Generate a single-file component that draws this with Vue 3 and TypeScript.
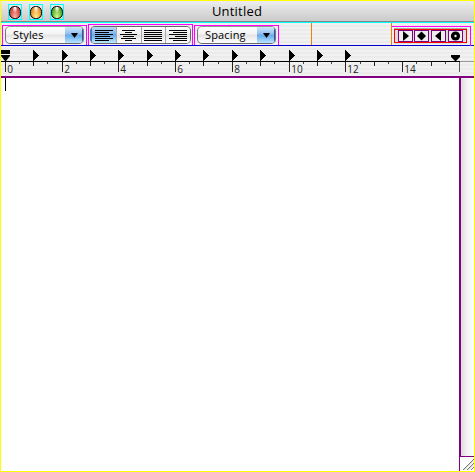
<script setup lang="ts">
const lights = ['red', 'amber', 'green']
const unit = 28.38
const origin = 5
const marks = Array.from({ length: 17 }, (_, i) => ({ i, x: Math.floor(origin + 0.3 + i * unit) }))
const halves = Array.from({ length: 16 }, (_, i) => Math.floor(origin + 0.3 + (i + 0.5) * unit))
const tabs = marks.slice(1, 13)
const labels = marks.filter((m) => m.i % 2 === 0 && m.i < 16)
const tri = (x: number) => `M${x} 4h1v1h1v1h1v1h1v1h1v1h1v1h-1v1h-1v1h-1v1h-1v1h-1v1h-1z`
const alignments = [
  [[0, 18], [0, 14], [0, 18], [0, 15], [0, 18], [0, 14]],
  [[2, 13], [5, 7], [0, 17], [3, 11], [1, 15], [5, 7]],
  [[0, 18], [0, 18], [0, 18], [0, 18], [0, 18], [0, 18]],
  [[0, 18], [4, 14], [0, 18], [6, 12], [0, 18], [4, 14]],
]
</script>

<template>
  <div class="window">
    <header class="titlebar">
      <div class="lights">
        <span v-for="c in lights" :key="c" class="light"><i :class="c"></i></span>
      </div>
      <div class="title">Untitled</div>
      <div class="balance"></div>
    </header>
    <div class="toolbar">
      <div class="group styles">
        <div class="popup"><span>Styles</span><b><svg width="7" height="5"><path d="M0 0h7L3.5 5z" /></svg></b></div>
      </div>
      <div class="group alignment">
        <div class="segments">
          <span v-for="(lines, n) in alignments" :key="n" :class="{ active: n === 0 }">
            <svg width="18" height="11" shape-rendering="crispEdges">
              <rect v-for="(l, k) in lines" :key="k" :x="l[0]" :y="k * 2" :width="l[1]" height="1" />
            </svg>
          </span>
        </div>
      </div>
      <div class="group spacing">
        <div class="popup"><span>Spacing</span><b><svg width="7" height="5"><path d="M0 0h7L3.5 5z" /></svg></b></div>
      </div>
      <div class="gap"></div>
      <div class="blank"></div>
      <div class="tabgroup">
        <div class="wells">
          <span><svg width="13" height="10"><path d="M4 0l6 5-6 5z" /></svg></span>
          <span><svg width="13" height="10"><path d="M6.5 .5L11 5 6.5 9.5 2 5z" /></svg></span>
          <span><svg width="13" height="10"><path d="M9 0v10L3 5z" /></svg></span>
          <span><svg width="13" height="10"><circle cx="6.5" cy="5" r="4.6" /><circle cx="6.5" cy="5" r="1.2" fill="#eee" /></svg></span>
        </div>
      </div>
    </div>
    <svg class="ruler" width="473" height="30" viewBox="1 0 473 30">
      <g shape-rendering="crispEdges">
        <rect x="1" y="15" width="459" height="1" />
        <rect x="460" y="15" width="14" height="1" fill="#999" />
        <rect v-for="m in marks" :key="m.i" :x="m.x" y="16" width="1" :height="m.i % 2 ? 4 : 10" :fill="m.i === 16 ? '#555' : '#222'" />
        <rect v-for="x in halves" :key="x" :x="x" y="16" width="1" height="2" fill="#444" />
      </g>
      <path v-for="t in tabs" :key="t.i" :d="tri(t.x)" />
      <path d="M1 4h9v4H1zM1 9h9v1L6 15H5L1 10z" />
      <path d="M451 9h9v2l-4 4h-1l-4-4z" />
      <text v-for="m in labels" :key="m.i" :x="m.x + 2.2" y="27">{{ m.i }}</text>
    </svg>
    <main>
      <div class="page"><i class="caret"></i></div>
      <aside>
        <div class="scroll"></div>
        <svg class="grip" width="14" height="13">
          <path d="M3 13L14 2M7 13l7-7M11 13l3-3" stroke="#777" />
          <path d="M4.4 13L14 3.4M8.4 13L14 7.4" stroke="#ccc" />
        </svg>
      </aside>
    </main>
  </div>
</template>

<style>
body { margin: 0; overflow: hidden; }
</style>
<style scoped>
* { box-sizing: border-box; }
.window { width: 475px; height: 472px; border: 1px solid #ff0; background: #fff; display: flex; flex-direction: column; font-family: "Open Sans", "Noto Sans", sans-serif; color: #000; }
svg { display: block; }
.titlebar { height: 22px; flex: none; display: flex; align-items: flex-start; background: linear-gradient(#ededed, #c9c9c9); border-bottom: 1px solid #0ff; box-shadow: inset 0 -1px #888; }
.lights { display: flex; gap: 7px; padding: 3px 0 0 7px; width: 70px; }
.light { width: 14px; height: 16px; border: 1px solid #0ff; display: flex; align-items: center; justify-content: center; }
.light i { width: 12px; height: 13px; border-radius: 5.5px; border: 1px solid; }
.red { border-color: #803c38 #a05550 #a77; background: radial-gradient(ellipse at 50% 5%, #fff 5%, transparent 38%), radial-gradient(ellipse at 50% 95%, #ffb7b0, #d85850 60%, #ad3832); }
.amber { border-color: #805522 #b08040 #aa9160; background: radial-gradient(ellipse at 50% 5%, #fff 5%, transparent 38%), radial-gradient(ellipse at 50% 95%, #fff49a, #f2a13b 60%, #ae6d20); }
.green { border-color: #3d6422 #648c3d #849769; background: radial-gradient(ellipse at 50% 5%, #fff 5%, transparent 38%), radial-gradient(ellipse at 50% 95%, #d5ff97, #70b735 60%, #427b20); }
.title { flex: 1; text-align: center; font-size: 13px; line-height: 20px; letter-spacing: .2px; padding-right: 1px; }
.balance { width: 70px; }
.toolbar { height: 23px; flex: none; display: flex; align-items: flex-end; background: repeating-linear-gradient(#f1f1f1 0 2px, #ebebeb 2px 4px); border-bottom: 1px solid #0000d0; }
.group { border: 1px solid #f0f; border-bottom: 0; flex: none; }
.styles { width: 85px; height: 20px; margin-left: 1px; padding: 0 2px 0 2px; }
.alignment { width: 105px; height: 21px; margin-left: 1px; padding: 1px 1px 0; }
.spacing { width: 85px; height: 20px; margin-left: 1px; padding: 0 2px; }
.popup { height: 18px; border: 1px solid #888; border-color: #999 #777 #666; border-radius: 5px; display: flex; background: linear-gradient(#fff, #f2f2f2 45%, #e3e3e3 50%, #fff); overflow: hidden; }
.popup span { flex: 1; padding-left: 7px; font-size: 11px; line-height: 15px; letter-spacing: .15px; }
.popup b { width: 18px; display: flex; align-items: center; justify-content: center; background: linear-gradient(#d5e7fa, #8dbdf0 45%, #64a7ea 50%, #b8e5ff); box-shadow: inset -1px 0 #2858a8; }
.segments { height: 18px; border: 1px solid #666; border-left: 0; border-radius: 5px; display: flex; overflow: hidden; }
.segments span { flex: 1; display: flex; align-items: center; justify-content: center; background: linear-gradient(#fff, #eee 45%, #e1e1e1 50%, #fff); border-left: 1px solid #aaa; }
.segments .active { border-left: 2px solid #4779b8; background: linear-gradient(#bcd9f5, #79b1eb 45%, #68a8e7 50%, #b9eaff); }
.gap { width: 32px; flex: none; }
.blank { height: 22px; width: 80px; flex: none; border-left: 1px solid #f08000; }
.tabgroup { position: relative; width: 79px; height: 22px; border-left: 1px solid #f08000; padding-top: 3px; flex: none; }
.tabgroup::before { content: ""; position: absolute; left: 0; top: 3px; width: 78px; height: 19px; border: 1px solid #f0f; border-left: 0; border-bottom: 0; }
.wells { margin: 3px 0 0 2px; width: 73px; height: 14px; border: 1px solid #f00; display: flex; gap: 2px; padding: 0 3px; background: #ddd; box-shadow: 0 -1px #aaa, 0 1px #ddd; }
.wells span { width: 15px; height: 12px; border: 1px solid #800080; background: #eee; }
.wells span:nth-child(2) { margin-left: -1px; }
.ruler { flex: none; background: repeating-linear-gradient(#f1f1f1 0 2px, #ebebeb 2px 4px); }
.ruler text { font-size: 10px; fill: #222; }
main { flex: 1; border-top: 2px solid #800080; display: flex; min-height: 0; }
.page { width: 458px; padding: 0 0 0 4px; }
.caret { display: block; width: 1px; height: 13px; background: #000; }
aside { width: 15px; display: flex; flex-direction: column; }
.scroll { flex: 1; border-left: 2px solid #800080; border-bottom: 1px solid #800080; background: linear-gradient(90deg, #ddd, #f3f3f3 45%, #fff); }
.grip { width: 15px; height: 14px; border-left: 1px solid #800080; }
</style>
